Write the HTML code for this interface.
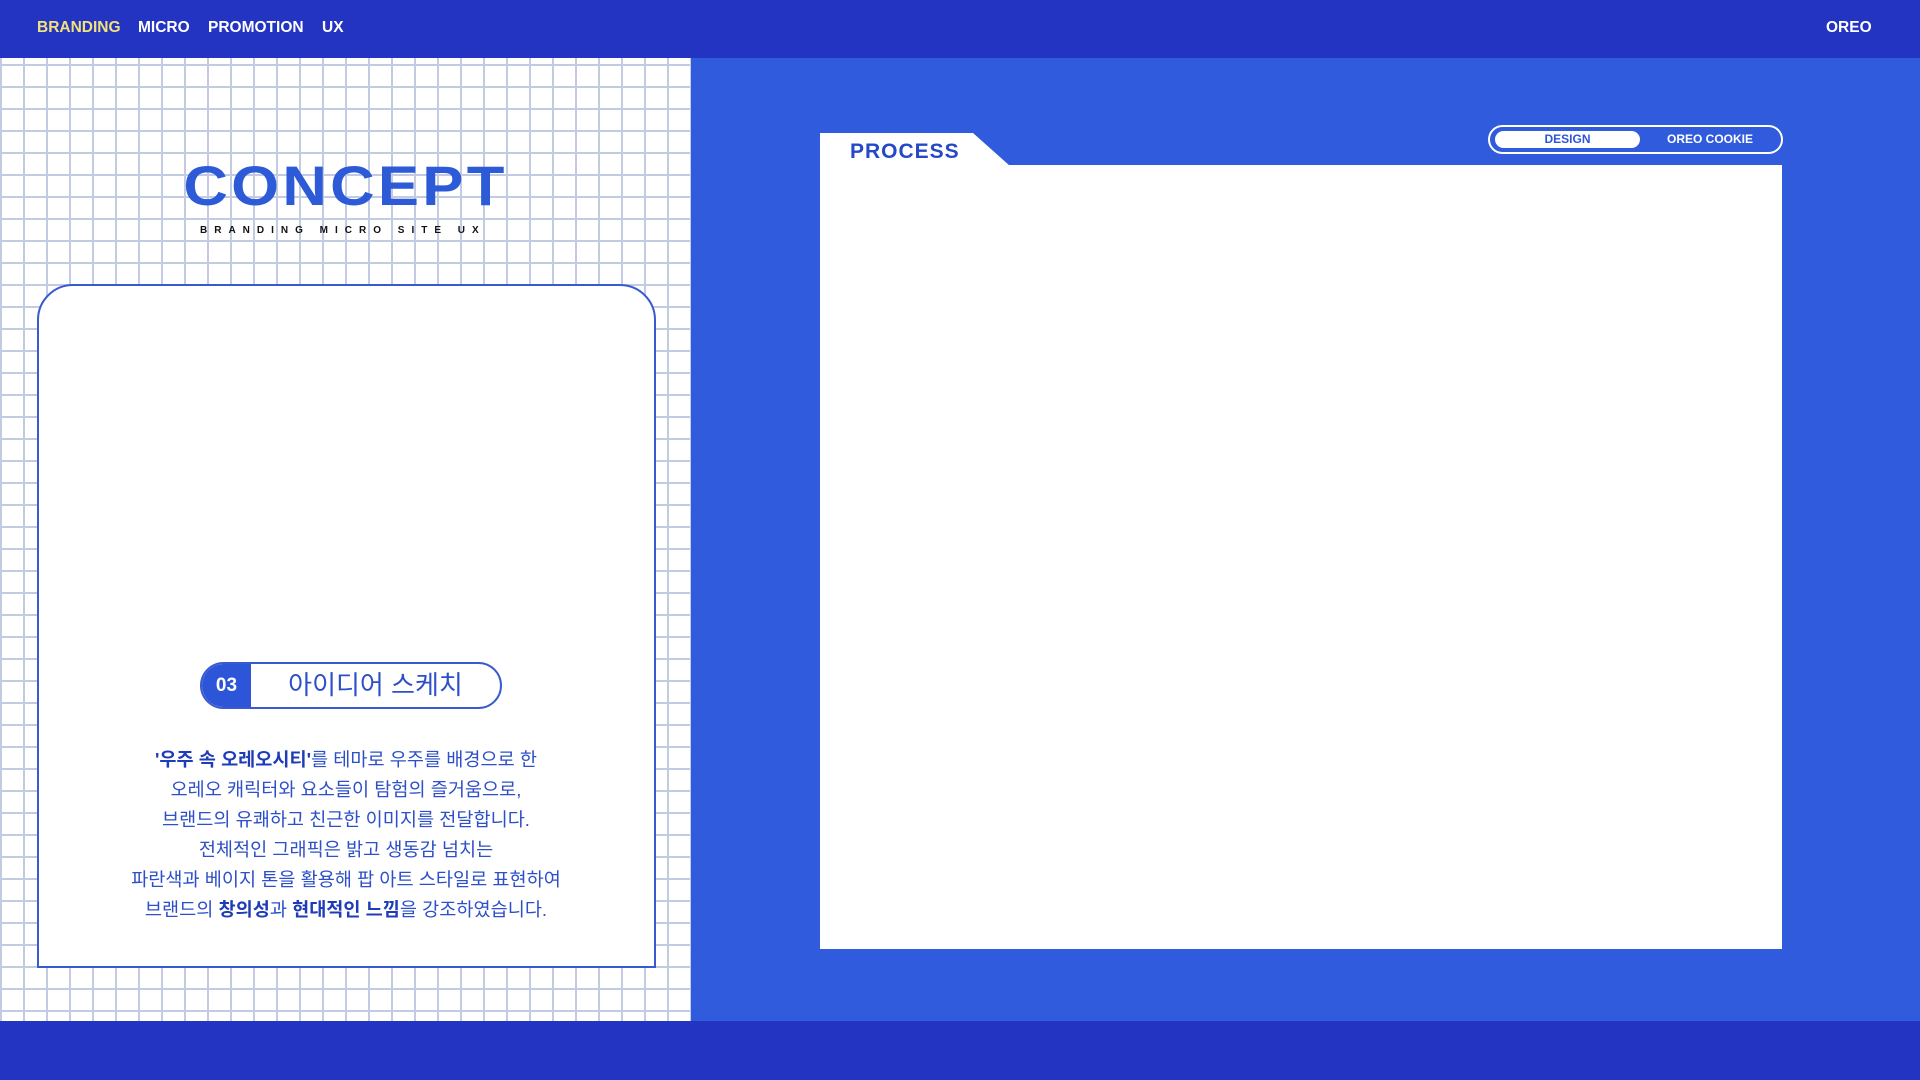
<!DOCTYPE html>
<html><head><meta charset="utf-8"><style>
*{margin:0;padding:0;box-sizing:border-box}
body{width:1920px;height:1080px;overflow:hidden;background:#2f5bdc;font-family:"Liberation Sans","Noto Sans CJK KR",sans-serif;position:relative}
.nav{position:absolute;left:0;top:0;width:1920px;height:58px;background:#2334c2}
.nav span{position:absolute;top:19px;font-size:15.5px;font-weight:bold;color:#fff}
.left{position:absolute;left:0;top:58px;width:691px;height:963px;background-color:#fff;
background-image:linear-gradient(to right,#c3cbe2 0,#c3cbe2 2px,transparent 2px),linear-gradient(to bottom,#c3cbe2 0,#c3cbe2 2px,transparent 2px);
background-size:23px 22px;background-position:0 6px}
.bottom{position:absolute;left:0;top:1021px;width:1920px;height:59px;background:#2334c2}
.concept{position:absolute;left:178px;top:156px;width:335px;text-align:center;font-size:56px;font-weight:bold;color:#2d5bd8;letter-spacing:3px;transform:scaleX(1.1);line-height:60px}
.sub{position:absolute;left:200px;top:225px;width:300px;font-size:10px;letter-spacing:7px;color:#111;font-weight:bold;white-space:nowrap}
.card{position:absolute;left:37px;top:284px;width:619px;height:684px;background:#fff;border:2px solid #3a5bd0;border-radius:36px 36px 0 0}
.pill{position:absolute;left:200px;top:662px;width:302px;height:47px;border:2px solid #3a5bd0;border-radius:24px;background:#fff;overflow:hidden}
.pill .num{position:absolute;left:0;top:0;width:49px;height:100%;background:#2d55d8;color:#fff;font-weight:900;font-size:19px;line-height:43px;text-align:center}
.pill .t{position:absolute;left:49px;right:0;top:0;text-align:center;font-size:26px;line-height:42px;color:#2d4fc8}
.para{position:absolute;left:46px;top:745px;width:600px;text-align:center;font-size:18.6px;line-height:30px;color:#2d4fc8}
.para b{color:#1f3cb8}
.panel{position:absolute;left:820px;top:165px;width:962px;height:784px;background:#fff}
.tab{position:absolute;left:820px;top:133px;width:190px;height:33px;background:#fff;clip-path:polygon(0 0,153px 0,190px 33px,0 33px)}
.process{position:absolute;left:850px;top:140px;font-size:21px;font-weight:bold;color:#2448c8;letter-spacing:1px}
.toggle{position:absolute;left:1488px;top:125px;width:295px;height:29px;border:2px solid #fff;border-radius:15px}
.toggle .on{position:absolute;left:5px;top:4px;width:145px;height:17px;background:#fff;border-radius:9px;color:#2d55d8;font-size:12px;font-weight:900;text-align:center;line-height:17px}
.toggle .off{position:absolute;left:155px;top:4px;width:130px;color:#fff;font-size:12px;font-weight:900;text-align:center;line-height:17px}
</style></head><body>
<div class="nav">
<span style="left:37px;color:#f3e27a">BRANDING</span>
<span style="left:138px">MICRO</span>
<span style="left:208px">PROMOTION</span>
<span style="left:322px">UX</span>
<span style="left:1826px">OREO</span>
</div>
<div class="left"></div>
<div class="concept">CONCEPT</div>
<div class="sub">BRANDING MICRO SITE UX</div>
<div class="card"></div>
<div class="pill"><div class="num">03</div><div class="t">아이디어 스케치</div></div>
<div class="para"><b>'우주 속 오레오시티'</b>를 테마로 우주를 배경으로 한<br>오레오 캐릭터와 요소들이 탐험의 즐거움으로,<br>브랜드의 유쾌하고 친근한 이미지를 전달합니다.<br>전체적인 그래픽은 밝고 생동감 넘치는<br>파란색과 베이지 톤을 활용해 팝 아트 스타일로 표현하여<br>브랜드의 <b>창의성</b>과 <b>현대적인 느낌</b>을 강조하였습니다.</div>
<div class="bottom"></div>
<div class="tab"></div>
<div class="panel"></div>
<div class="process">PROCESS</div>
<div class="toggle"><div class="on">DESIGN</div><div class="off">OREO COOKIE</div></div>
</body></html>
